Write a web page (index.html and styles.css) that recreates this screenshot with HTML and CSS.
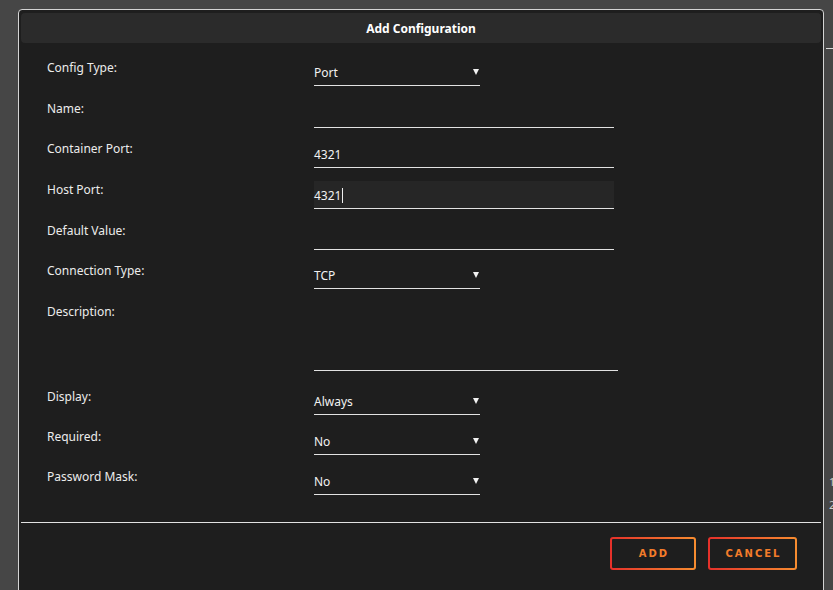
FILE: index.html
```html
<!DOCTYPE html>
<html lang="en">
	<head>
		<meta charset="utf-8">
		<title>Add Configuration</title>
		<link rel="stylesheet" href="styles.css">
	</head>
	<body>
		<div class="behind">
			<span class="behind-line"></span>
			<span class="behind-a">1</span>
			<span class="behind-b">2</span>
		</div>
		<div class="modal">
			<div class="modal-head">Add Configuration</div>
			<div class="modal-body">
				<div class="row">
					<label>Config Type:</label>
					<div class="field select">Port<i class="arrow"></i></div>
				</div>
				<div class="row">
					<label>Name:</label>
					<div class="field text"></div>
				</div>
				<div class="row">
					<label>Container Port:</label>
					<div class="field text">4321</div>
				</div>
				<div class="row">
					<label>Host Port:</label>
					<div class="field text focus">4321<span class="caret"></span></div>
				</div>
				<div class="row">
					<label>Default Value:</label>
					<div class="field text"></div>
				</div>
				<div class="row">
					<label>Connection Type:</label>
					<div class="field select">TCP<i class="arrow"></i></div>
				</div>
				<div class="row row-tall">
					<label>Description:</label>
					<div class="field area"></div>
				</div>
				<div class="row row-small">
					<label>Display:</label>
					<div class="field select">Always<i class="arrow"></i></div>
				</div>
				<div class="row row-small">
					<label>Required:</label>
					<div class="field select">No<i class="arrow"></i></div>
				</div>
				<div class="row row-small">
					<label>Password Mask:</label>
					<div class="field select">No<i class="arrow"></i></div>
				</div>
			</div>
			<div class="modal-foot">
				<button class="btn btn-add">ADD</button>
				<button class="btn btn-cancel">CANCEL</button>
			</div>
		</div>
	</body>
</html>
```

FILE: styles.css
```css
body {
	margin: 0;
	padding: 9px 0 0 18px;
	background: #464646;
	font-family: "Noto Sans", "Open Sans", sans-serif;
	font-size: 12px;
	color: #ececec;
	height: 581px;
	overflow: hidden;
	position: relative;
}
.behind {
	position: absolute;
	left: 826px;
	top: 0;
	width: 7px;
	height: 590px;
}
.behind-line {
	position: absolute;
	left: 0;
	top: 48px;
	width: 7px;
	height: 1px;
	background: #d8d8d8;
}
.behind-a,
.behind-b {
	position: absolute;
	left: 3px;
	font-size: 11px;
	color: #cfcfcf;
}
.behind-a { top: 474px; }
.behind-b { top: 497px; }

.modal {
	width: 806px;
	height: 600px;
	border: 1px solid #d4d4d4;
	border-radius: 4px;
	background: #1e1e1e;
	padding: 3px 2px 0;
	box-sizing: border-box;
}
.modal-head {
	height: 30px;
	line-height: 32px;
	background: #2b2b2b;
	border-radius: 4px;
	text-align: center;
	font-weight: bold;
	font-size: 12px;
	color: #fff;
}
.modal-body {
	padding: 13px 0 0 26px;
}
.row {
	display: grid;
	grid-template-columns: 267px 1fr;
	height: 40.7px;
}
.row-tall {
	height: 85px;
}
.row-small {
	height: 40px;
}
.row label {
	line-height: 16px;
	padding-top: 4px;
}
.field {
	position: relative;
	margin-top: 2px;
	height: 28px;
	line-height: 28px;
	border-bottom: 1px solid #e2e2e2;
	box-sizing: border-box;
	padding-top: 1px;
	font-size: 12px;
	color: #f2f2f2;
}
.select {
	width: 166px;
}
.text {
	width: 300px;
	margin-top: 3px;
}
.focus {
	background: #262626;
}
.caret {
	display: inline-block;
	width: 1px;
	height: 15px;
	background: #eee;
	vertical-align: -3px;
	margin-left: 1px;
}
.area {
	width: 304px;
	height: 69px;
}
.arrow {
	position: absolute;
	right: 1px;
	top: 11px;
	width: 0;
	height: 0;
	border-left: 3px solid transparent;
	border-right: 3px solid transparent;
	border-top: 6px solid #f2f2f2;
}
.modal-foot {
	margin-top: 17px;
	border-top: 1px solid #e2e2e2;
	padding: 14px 24px 0 0;
	display: flex;
	justify-content: flex-end;
	gap: 12px;
}
.btn {
	height: 33px;
	border: 2px solid transparent;
	border-radius: 3px;
	background: linear-gradient(#1e1e1e, #1e1e1e) padding-box,
		linear-gradient(90deg, #e5302a, #f78d30) border-box;
	color: #f47c2a;
	font-family: "DejaVu Sans", sans-serif;
	font-weight: bold;
	font-size: 10px;
	letter-spacing: 2px;
	padding: 0 0 0 2px;
	cursor: pointer;
}
.btn-add { width: 86px; }
.btn-cancel { width: 89px; }
```
